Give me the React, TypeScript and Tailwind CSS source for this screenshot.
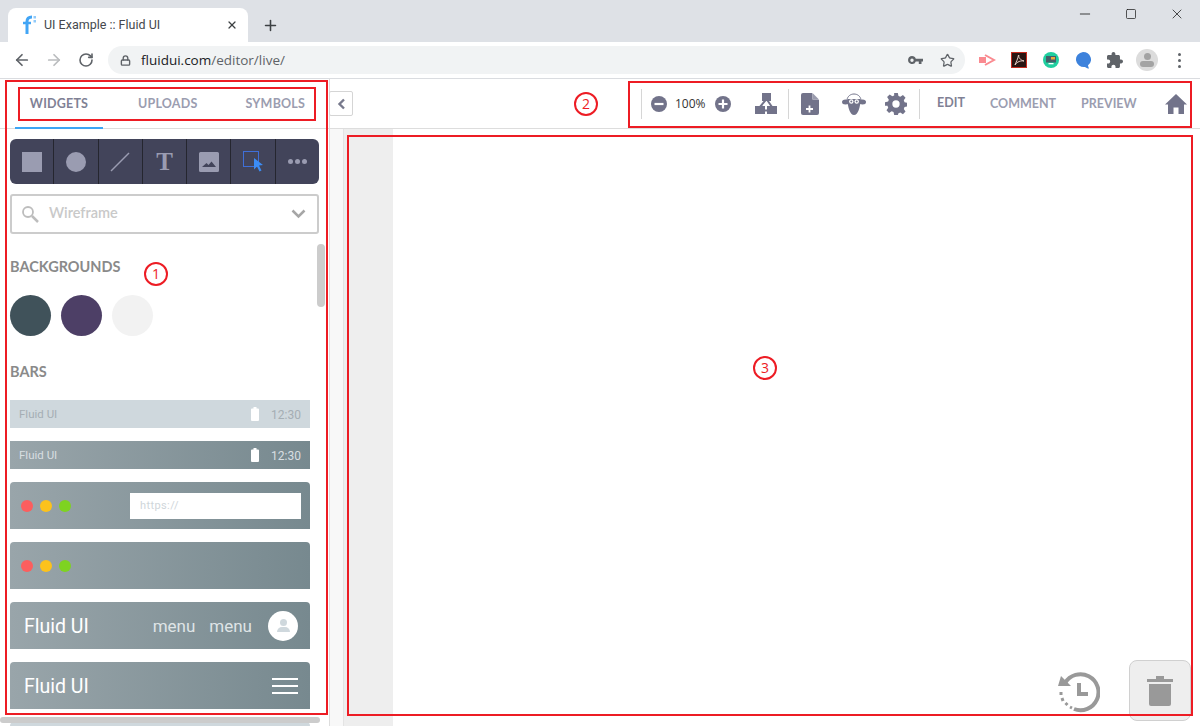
import React from "react";
import { ArrowLeft, ArrowRight, RotateCw, Lock, Star, Plus, X, Minus, Square } from "lucide-react";

const Dots = () => (
  <div className="flex gap-[7px]">
    <div className="h-3 w-3 rounded-full bg-[#fc5e5e]" />
    <div className="h-3 w-3 rounded-full bg-[#fcc21c]" />
    <div className="h-3 w-3 rounded-full bg-[#7ed321]" />
  </div>
);

const Battery = () => (
  <svg width="8" height="14" viewBox="0 0 8 14" className="block">
    <path d="M2.500 0h3v1.500H7a1 1 0 0 1 1 1V13a1 1 0 0 1-1 1H1a1 1 0 0 1-1-1V2.500a1 1 0 0 1 1-1h1.500z" fill="#fff" />
  </svg>
);

const GRAD = "bg-gradient-to-r from-[#99a5aa] to-[#77898f]";

const Chrome = () => (
  <div className="h-[79px] shrink-0 font-['Open_Sans',sans-serif]">
    <div className="flex h-[42px] items-end bg-[#dee1e6] pl-2">
      <div className="flex h-[34px] w-[240px] items-center rounded-t-lg bg-white pl-[14px] pr-[10px]">
        <svg width="18" height="20" viewBox="0 0 18 20">
          <path d="M5 19V6.500C5 3.500 6.500 2 10 2" fill="none" stroke="#42a5f5" strokeWidth="3" />
          <path d="M1 8h8" stroke="#42a5f5" strokeWidth="2.500" />
          <rect x="11.500" y="1" width="2.500" height="2.500" fill="#90caf9" />
          <rect x="11.500" y="5" width="2.500" height="2.500" fill="#90caf9" />
        </svg>
        <span className="ml-1 flex-1 font-['Roboto',sans-serif] text-[12.500px] text-[#45484d]">UI Example :: Fluid UI</span>
        <X size={12} strokeWidth={2.500} className="text-[#3c4043]" />
      </div>
      <div className="flex h-[34px] w-[44px] items-center justify-center">
        <Plus size={17} strokeWidth={2.200} className="text-[#3c4043]" />
      </div>
      <div className="flex h-full flex-1 items-start justify-end">
        <div className="flex h-7 w-[46px] items-center justify-center"><Minus size={16} strokeWidth={1.300} className="text-[#222]" /></div>
        <div className="flex h-7 w-[46px] items-center justify-center"><Square size={12} strokeWidth={1.500} className="text-[#222]" /></div>
        <div className="flex h-7 w-[46px] items-center justify-center"><X size={16} strokeWidth={1.200} className="text-[#222]" /></div>
      </div>
    </div>
    <div className="flex h-[37px] items-center border-b border-[#dadce0] bg-white">
      <div className="flex w-[108px] items-center pl-[13px] text-[#5f6368]">
        <ArrowLeft size={18} strokeWidth={2.300} />
        <ArrowRight size={18} strokeWidth={2.300} className="ml-[14px] text-[#babcbe]" />
        <RotateCw size={16} strokeWidth={2.400} className="ml-[15px]" />
      </div>
      <div className="flex h-7 w-[857px] items-center rounded-full bg-[#f1f3f4] pl-[12px] pr-[10px]">
        <Lock size={11} strokeWidth={3} className="text-[#5f6368]" />
        <span className="ml-[10px] flex-1 text-[13.500px] text-[#5f6368]"><span className="text-[#202124]">fluidui.com</span>/editor/live/</span>
        <svg className="mr-[17px]" width="15" height="9" viewBox="0 0 15 9">
          <path fillRule="evenodd" d="M4 0a4 4 0 0 1 3.800 2.800H15v2.700h-1.500V8h-2.700V5.500H7.800A4 4 0 1 1 4 0zm0 2.500a1.700 1.700 0 1 0 0 3.400 1.700 1.700 0 0 0 0-3.400z" fill="#5f6368" />
        </svg>
        <Star size={15} strokeWidth={2} className="text-[#5f6368]" />
      </div>
      <div className="flex flex-1 items-center pl-[14px]">
        <svg width="17" height="16" viewBox="0 0 17 16">
          <path d="M6 3l9 5-9 5" fill="none" stroke="#fa8a90" strokeWidth="2" />
          <rect x="0" y="5" width="7" height="6" fill="#fa8a90" />
        </svg>
        <div className="ml-[15px] flex h-4 w-4 items-center justify-center border border-[#c62b1f] bg-[#2a1512]">
          <svg width="12" height="12" viewBox="0 0 12 12">
            <path d="M6 1c-1 2 1 5 5 6-3-.5-7 .5-9 4 1-3 3-6 3.500-10" fill="none" stroke="#e8cfc8" strokeWidth="1" />
          </svg>
        </div>
        <svg className="ml-[16px]" width="16" height="16" viewBox="0 0 16 16">
          <circle cx="8" cy="8" r="8" fill="#1fcf9f" />
          <rect x="3" y="4" width="10" height="6.500" fill="#44606a" />
          <rect x="8" y="5" width="4" height="2.500" fill="#e9a93c" />
          <rect x="5.500" y="11" width="5" height="1.300" fill="#fff" />
        </svg>
        <svg className="ml-[16px]" width="16" height="17" viewBox="0 0 16 17">
          <path d="M8 0a8 7.500 0 0 1 5 13.300c0 1 .5 2 1 3.200-1.500-.2-3-.8-4-1.600A8 7.500 0 1 1 8 0z" fill="#3d82dc" />
        </svg>
        <svg className="ml-[16px]" width="16" height="16" viewBox="2 1 21 21">
          <path d="M20.500 11H19V7c0-1.100-.9-2-2-2h-4V3.500C13 2.120 11.880 1 10.500 1S8 2.120 8 3.500V5H4c-1.100 0-1.990.9-1.990 2v3.800H3.500c1.490 0 2.700 1.210 2.700 2.700s-1.210 2.700-2.700 2.700H2V20c0 1.100.9 2 2 2h3.800v-1.500c0-1.490 1.210-2.700 2.700-2.700 1.490 0 2.700 1.210 2.700 2.700V22H17c1.100 0 2-.9 2-2v-4h1.500c1.380 0 2.500-1.120 2.500-2.500S21.880 11 20.500 11z" fill="#5f6368" />
        </svg>
        <div className="ml-[13px] flex h-[22px] w-[22px] flex-col items-center justify-center rounded-full bg-[#dcdcdc]">
          <div className="h-[7px] w-[7px] rounded-full bg-[#a3a3a3]" />
          <div className="mt-[1px] h-[6px] w-[14px] rounded-full bg-[#a3a3a3]" />
        </div>
        <div className="ml-[20px] flex flex-col gap-[3px]">
          <div className="h-[3px] w-[3px] rounded-full bg-[#5f6368]" />
          <div className="h-[3px] w-[3px] rounded-full bg-[#5f6368]" />
          <div className="h-[3px] w-[3px] rounded-full bg-[#5f6368]" />
        </div>
      </div>
    </div>
  </div>
);

const ToolCell = ({ children, border = true }: { children: React.ReactNode; border?: boolean }) => (
  <div className={`flex h-full flex-1 items-center justify-center ${border ? "border-r border-[#25262f]" : ""}`}>{children}</div>
);

const Toolbox = () => (
  <div className="flex h-[45px] w-[309px] items-center rounded-md bg-[#42445a]">
    <ToolCell><div className="h-5 w-5 bg-[#9a9cb1]" /></ToolCell>
    <ToolCell><div className="h-5 w-5 rounded-full bg-[#9a9cb1]" /></ToolCell>
    <ToolCell>
      <svg width="20" height="20" viewBox="0 0 20 20"><path d="M1 19L19 1" stroke="#9a9cb1" strokeWidth="1.500" /></svg>
    </ToolCell>
    <ToolCell><span className="font-['Liberation_Serif',serif] text-[25px] font-bold leading-none text-[#9a9cb1]">T</span></ToolCell>
    <ToolCell>
      <svg width="20" height="20" viewBox="0 0 20 20">
        <path fillRule="evenodd" d="M1.500 0h17A1.500 1.500 0 0 1 20 1.500v17a1.500 1.500 0 0 1-1.500 1.500h-17A1.500 1.500 0 0 1 0 18.500v-17A1.500 1.500 0 0 1 1.500 0zM3 15h14l-4.500-5.500-3 3.500-2-2z" fill="#9a9cb1" />
      </svg>
    </ToolCell>
    <ToolCell>
      <svg width="21" height="23" viewBox="0 0 21 23">
        <rect x="0.500" y="1.500" width="15" height="15" fill="none" stroke="#3f6fd8" />
        <path d="M11 8l9 7-4 .5 2.500 5-2 1-2.500-5-3 3z" fill="#3b8cf5" />
      </svg>
    </ToolCell>
    <ToolCell border={false}>
      <div className="flex gap-[2px]">
        <div className="h-[5px] w-[5px] rounded-full bg-[#9a9cb1]" />
        <div className="h-[5px] w-[5px] rounded-full bg-[#9a9cb1]" />
        <div className="h-[5px] w-[5px] rounded-full bg-[#9a9cb1]" />
      </div>
    </ToolCell>
  </div>
);

const Search = () => (
  <div className="mt-[10px] flex h-10 w-[309px] items-center rounded-[3px] border-2 border-[#cccccc] bg-white pl-[9px] pr-[11px]">
    <svg width="18" height="18" viewBox="0 0 18 18">
      <circle cx="7" cy="7" r="5" fill="none" stroke="#bdbdbd" strokeWidth="1.800" />
      <path d="M11 11l6 6" stroke="#bdbdbd" strokeWidth="2.500" />
    </svg>
    <span className="ml-[10px] flex-1 pb-[2px] font-['Lato',sans-serif] text-[14.500px] font-semibold text-[#c9c9c9]">Wireframe</span>
    <svg width="15" height="10" viewBox="0 0 15 10"><path d="M1.500 1.500l6 6 6-6" fill="none" stroke="#a6a6a6" strokeWidth="2.500" /></svg>
  </div>
);

const SectionTitle = ({ children, className }: { children: React.ReactNode; className: string }) => (
  <div className={`font-['Lato',sans-serif] text-[14.500px] font-bold leading-4 text-[#8a8a8a] ${className}`}>{children}</div>
);

const StatusBar = ({ dark }: { dark: boolean }) => (
  <div className={`flex h-7 w-[300px] items-center pl-[9px] pr-[10px] font-['Roboto',sans-serif] text-[11.500px] ${dark ? GRAD + " text-[#d8dee1]" : "bg-[#cfd8dd] text-[#a5aeb4]"}`}>
    <span className="flex-1 pt-[2px]">Fluid UI</span>
    <Battery />
    <span className={`ml-[12px] w-[29px] pt-[2px] text-xs ${dark ? "text-[#d8dee1]" : ""}`}>12:30</span>
  </div>
);

const Sidebar = () => (
  <div className="relative flex w-[330px] shrink-0 flex-col border-r border-[#dddddd] bg-white">
    <div className="flex h-[50px] shrink-0 items-center border-b border-[#dddddd] font-['Lato',sans-serif] text-[12.500px] font-bold tracking-[0.2px] text-[#9b9db0]">
      <div className="relative ml-[15px] flex h-full w-[88px] items-center justify-center pt-[2px] text-[#7f8195]">
        WIDGETS
        <div className="absolute -bottom-[1px] left-0 h-[2px] w-full bg-[#3da5f4]" />
      </div>
      <span className="ml-[35px] pt-[2px]">UPLOADS</span>
      <span className="ml-[48px] pt-[2px]">SYMBOLS</span>
    </div>
    <div className="flex-1 overflow-hidden pl-[10px] pt-[10px]">
      <Toolbox />
      <Search />
      <SectionTitle className="mt-[24px] pt-[1px]">BACKGROUNDS</SectionTitle>
      <div className="mt-[20px] flex gap-[10px]">
        <div className="h-[41px] w-[41px] rounded-full bg-[#40525a]" />
        <div className="h-[41px] w-[41px] rounded-full bg-[#4d3f66]" />
        <div className="h-[41px] w-[41px] rounded-full bg-[#f2f2f2]" />
      </div>
      <SectionTitle className="mt-[27px] pt-[1px]">BARS</SectionTitle>
      <div className="mt-[20px] flex flex-col gap-[13px]">
        <StatusBar dark={false} />
        <StatusBar dark />
        <div className={`flex h-[47px] w-[300px] items-center justify-between rounded-t-[4px] pl-[11px] pr-[9px] ${GRAD}`}>
          <Dots />
          <div className="flex h-[26px] w-[171px] items-center bg-white pl-[10px] pt-[2px] font-['Roboto',sans-serif] text-[11px] tracking-[0.4px] text-[#cfd6da]">https://</div>
        </div>
        <div className={`flex h-[47px] w-[300px] items-center rounded-t-[4px] pl-[11px] ${GRAD}`}>
          <Dots />
        </div>
        <div className={`flex h-[47px] w-[300px] items-center rounded-t-[4px] pl-[14px] pr-3 font-['Roboto',sans-serif] ${GRAD}`}>
          <span className="flex-1 pt-[2px] text-[19.500px] text-white">Fluid UI</span>
          <span className="pt-[2px] text-[17px] text-[#dfe4e6]">menu</span>
          <span className="ml-[14px] pt-[2px] text-[17px] text-[#dfe4e6]">menu</span>
          <div className="ml-[16px] flex h-[30px] w-[30px] flex-col items-center justify-center rounded-full bg-white">
            <div className="h-[7px] w-[7px] rounded-full bg-[#cfd8dd]" />
            <div className="mt-[1px] h-[5px] w-[13px] rounded-t-full bg-[#cfd8dd]" />
          </div>
        </div>
        <div className={`flex h-[47px] w-[300px] items-center justify-between rounded-t-[4px] pl-[14px] pr-[12px] font-['Roboto',sans-serif] ${GRAD}`}>
          <span className="pt-[2px] text-[19.500px] text-white">Fluid UI</span>
          <div className="flex flex-col gap-[5px]">
            <div className="h-[2px] w-[26px] bg-white" />
            <div className="h-[2px] w-[26px] bg-white" />
            <div className="h-[2px] w-[26px] bg-white" />
          </div>
        </div>
        <div className="h-[10px] w-[300px] rounded-t-[4px] bg-[#cfd8dd]" />
      </div>
    </div>
    <div className="absolute left-[317px] top-[165px] h-[63px] w-2 rounded bg-[#cccccc]" />
    <div className="absolute bottom-[3px] left-0 h-[6px] w-[320px] rounded bg-[#cccccc]" />
  </div>
);

const IconFill = "#72738a";
const VLine = ({ className }: { className: string }) => <div className={`h-[30px] w-px bg-[#d6d6d6] ${className}`} />;

const CircleSign = ({ plus }: { plus?: boolean }) => (
  <svg width="16" height="16" viewBox="0 0 16 16" className="block">
    <circle cx="8" cy="8" r="8" fill={IconFill} />
    <path d={plus ? "M3.500 8h9M8 3.500v9" : "M3.500 8h9"} stroke="#fff" strokeWidth="2.200" />
  </svg>
);

const TopBar = () => (
  <div className="flex h-[50px] shrink-0 items-center border-b border-[#dddddd] bg-white">
    <div className="relative -ml-[1px] flex h-[25px] w-6 items-center justify-center rounded-[2px] border border-[#d5d5d5] bg-white">
      <svg width="9" height="12" viewBox="0 0 9 12"><path d="M7 1.500L2.500 6 7 10.500" fill="none" stroke="#77798c" strokeWidth="2.400" /></svg>
    </div>
    <VLine className="ml-[288px]" />
    <div className="ml-[9px]"><CircleSign /></div>
    <span className="ml-[8px] w-[31px] font-['Open_Sans',sans-serif] text-xs text-[#333]">100%</span>
    <div className="ml-[9px]"><CircleSign plus /></div>
    <svg className="ml-[24px]" width="22" height="21" viewBox="0 0 22 21">
      <rect x="7" y="0" width="9" height="8" fill={IconFill} />
      <rect x="0" y="13" width="10" height="8" fill={IconFill} />
      <rect x="12" y="13" width="10" height="8" fill={IconFill} />
      <path d="M11.500 6L5 14M11.500 6L17 14M9 17.500h4" stroke={IconFill} strokeWidth="2" fill="none" />
    </svg>
    <VLine className="ml-[11px]" />
    <svg className="ml-[12px]" width="18" height="22" viewBox="0 0 18 22">
      <path d="M2 0h9l7 7v13a2 2 0 0 1-2 2H2a2 2 0 0 1-2-2V2a2 2 0 0 1 2-2z" fill={IconFill} />
      <path d="M11.500 0v6.500H18V0z" fill="#fff" />
      <path d="M11.500 0l6.500 6.500h-6.500z" fill="#9a9bad" />
      <path d="M5 16h7M8.500 12.500v7" stroke="#fff" strokeWidth="1.800" />
    </svg>
    <svg className="ml-[23px]" width="24" height="22" viewBox="0 0 24 22">
      <ellipse cx="3.500" cy="9" rx="3.500" ry="2.500" fill={IconFill} />
      <ellipse cx="20.500" cy="9" rx="3.500" ry="2.500" fill={IconFill} />
      <path d="M5 7c1-8 13-8 14 0" fill="#fff" stroke={IconFill} />
      <path d="M5.500 6h13c0 8-2.500 16-6.500 16S5.500 14 5.500 6z" fill={IconFill} />
      <circle cx="9.300" cy="8.500" r="2.200" fill="#fff" />
      <circle cx="14.700" cy="8.500" r="2.200" fill="#fff" />
      <circle cx="9.300" cy="8.500" r="1" fill={IconFill} />
      <circle cx="14.700" cy="8.500" r="1" fill={IconFill} />
    </svg>
    <svg className="ml-[19px]" width="22" height="22" viewBox="0 0 24 24">
      <path fill={IconFill} fillRule="evenodd" d="M10 0h4l.7 3.400 2 .8L19.600 2.300l2.800 2.800-1.900 2.900.8 2 3.400.7v4l-3.400.7-.8 2 1.900 2.900-2.800 2.800-2.900-1.900-2 .8L14 24h-4l-.7-3.400-2-.8-2.900 1.900-2.800-2.800 1.900-2.900-.8-2L0 14v-4l3.400-.7.8-2-1.900-2.900 2.800-2.800 2.900 1.900 2-.8zM12 8a4 4 0 1 0 0 8 4 4 0 0 0 0-8z" />
    </svg>
    <VLine className="ml-[12px]" />
    <div className="ml-[15px] flex h-full w-[32px] items-center justify-center whitespace-nowrap border-b-2 border-[#3da5f4] pt-[2px] font-['Lato',sans-serif] text-[12.500px] font-bold text-[#7f8195]">EDIT</div>
    <span className="ml-[23px] w-[66px] whitespace-nowrap pt-[1px] font-['Lato',sans-serif] text-[12.500px] font-bold text-[#9b9db0]">COMMENT</span>
    <span className="ml-[25px] w-[57px] whitespace-nowrap pt-[1px] font-['Lato',sans-serif] text-[12.500px] font-bold text-[#9b9db0]">PREVIEW</span>
    <svg className="ml-[27px]" width="22" height="20" viewBox="0 0 22 20">
      <path d="M11 0l11 10.500h-3V20h-5.500v-6.500h-5V20H3v-9.500H0z" fill={IconFill} />
    </svg>
  </div>
);

const Canvas = () => (
  <div className="relative flex min-h-0 flex-1">
    <div className="w-[14px] shrink-0 border-r border-[#e4e4e4] bg-[#f8f8f8]" />
    <div className="w-[49px] shrink-0 bg-[#eeeeee]" />
    <div className="flex-1 bg-white" />
    <div className="absolute bottom-[13px] right-[100px]">
      <svg width="44" height="42" viewBox="0 0 44 42">
        <path d="M9 12A18 18 0 1 1 18 38" fill="none" stroke="#999" strokeWidth="4" />
        <path d="M2 15l3-10 10 10z" fill="#999" />
        <path d="M23 12v11h9" fill="none" stroke="#999" strokeWidth="4" />
        <path d="M5 21v3M6 27l1 3M9.500 32l2 2M14 36l2 1" stroke="#999" strokeWidth="3" />
      </svg>
    </div>
    <div className="absolute bottom-[5px] right-[9px] flex h-[61px] w-[62px] items-center justify-center rounded-lg border border-[#d0d0d0] bg-[#eeeeee]">
      <svg width="26" height="30" viewBox="0 0 26 30" fill="#999999">
        <rect x="0" y="3" width="26" height="3" />
        <rect x="9" y="0" width="8" height="3" />
        <path d="M2 8h22v20a2 2 0 0 1-2 2H4a2 2 0 0 1-2-2z" />
      </svg>
    </div>
  </div>
);

const Annotation = ({ n, className }: { n: number; className: string }) => (
  <div className={`absolute flex h-[24px] w-[24px] items-center justify-center rounded-full border-2 border-[#ed1c24] font-['Open_Sans',sans-serif] text-sm leading-none text-[#ed1c24] ${className}`}>{n}</div>
);

const Box = ({ className }: { className: string }) => (
  <div className={`pointer-events-none absolute border-2 border-[#ed1c24] ${className}`} />
);

export default function App() {
  return (
    <div className="relative flex h-[726px] w-[1200px] flex-col overflow-hidden bg-white">
      <Chrome />
      <div className="flex min-h-0 flex-1">
        <Sidebar />
        <div className="flex min-w-0 flex-1 flex-col">
          <TopBar />
          <Canvas />
        </div>
      </div>
      <Box className="left-[5px] top-[80px] h-[635px] w-[323px]" />
      <Box className="left-[18px] top-[87px] h-[34px] w-[298px]" />
      <Box className="left-[628px] top-[81px] h-[47px] w-[564px]" />
      <Box className="left-[347px] top-[135px] h-[581px] w-[846px]" />
      <Annotation n={1} className="left-[144px] top-[262px]" />
      <Annotation n={2} className="left-[574px] top-[92px]" />
      <Annotation n={3} className="left-[753px] top-[356px]" />
    </div>
  );
}
